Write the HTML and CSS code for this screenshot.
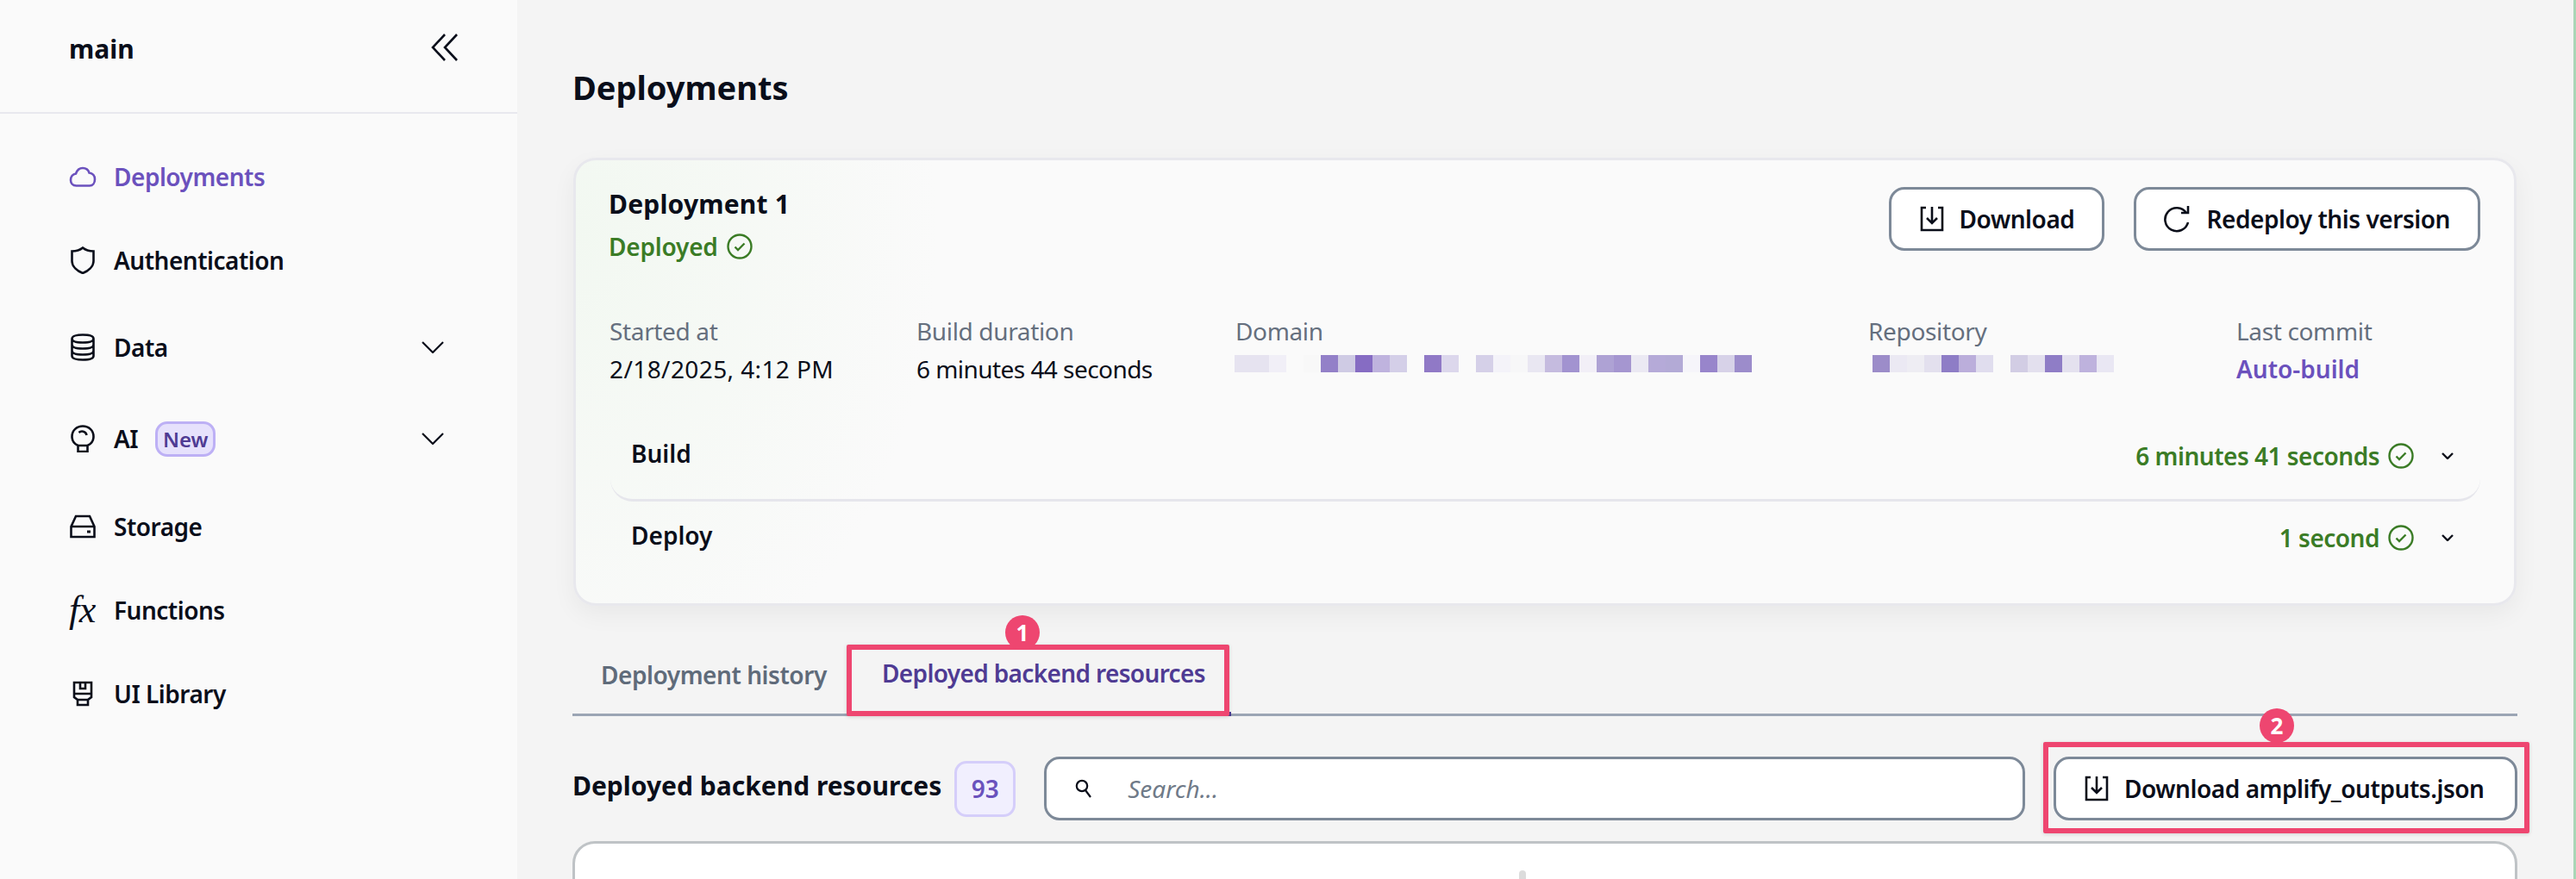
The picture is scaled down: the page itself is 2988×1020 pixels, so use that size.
FILE: index.html
```html
<!DOCTYPE html>
<html lang="en">
    <head>
        <meta charset="UTF-8" />
        <title>Deployments</title>
        <link rel="stylesheet" href="styles.css">
    </head>

    <body>
        <aside class="sidebar">
            <div class="side-head">
                <span class="branch">main</span>
                <svg class="collapse" viewBox="0 0 32 32"><path d="M16 1 L2 16 L16 31 M30 1 L16 16 L30 31" /></svg>
            </div>
            <nav class="nav">
                <a class="nav-item active">
                    <svg class="nav-icon" viewBox="0 0 32 32"><path d="M8.5 26.5 C4 26.5 2 23 2 20 C2 16 4.5 13 8 12.5 C9.5 8 13 6 16 6 C20 6 22.5 8.5 23.5 11.5 C27.5 12 30 15 30 19 C30 23.5 27.5 26.5 24 26.5 Z" /></svg>
                    Deployments
                </a>
                <a class="nav-item">
                    <svg class="nav-icon" viewBox="0 0 32 32"><path d="M16 1.5 C19 4 24 5.5 28.5 5.5 V17 C28.5 23.5 22 28.5 16 31 C10 28.5 3.5 23.5 3.5 17 V5.5 C8 5.5 13 4 16 1.5 Z" /></svg>
                    Authentication
                </a>
                <a class="nav-item tall">
                    <svg class="nav-icon" viewBox="0 0 32 32"><path d="M3.5 6 C3.5 3 9 1.5 16 1.5 S28.5 3 28.5 6 V26 C28.5 29 23 30.5 16 30.5 S3.5 29 3.5 26 Z M3.5 6 C3.5 9 9 10.5 16 10.5 S28.5 9 28.5 6 M3.5 13 C3.5 16 9 17.5 16 17.5 S28.5 16 28.5 13 M3.5 20 C3.5 23 9 24.5 16 24.5 S28.5 23 28.5 20" /></svg>
                    Data
                    <svg class="nav-caret" viewBox="0 0 26 14"><path d="M1 1 L13 13 L25 1" /></svg>
                </a>
                <a class="nav-item tall">
                    <svg class="nav-icon" viewBox="0 0 32 32"><path d="M10.5 24 C6 22 3.5 18 3.5 13.5 C3.5 6.5 9 1.5 16 1.5 S28.5 6.5 28.5 13.5 C28.5 18 26 22 21.5 24 Z M10.5 24 V31 H21.5 V24 M11.5 9 C14 6.5 19.5 7 20.5 12" /></svg>
                    AI
                    <span class="new-tag">New</span>
                    <svg class="nav-caret" viewBox="0 0 26 14"><path d="M1 1 L13 13 L25 1" /></svg>
                </a>
                <a class="nav-item">
                    <svg class="nav-icon" viewBox="0 0 32 32"><path d="M2.5 16 L8 4 H24 L29.5 16 V28 H2.5 Z M2.5 16 H29.5" /><rect class="fill" x="21" y="20.5" width="4" height="3" /></svg>
                    Storage
                </a>
                <a class="nav-item">
                    <span class="fx">fx</span>
                    Functions
                </a>
                <a class="nav-item">
                    <svg class="nav-icon" viewBox="0 0 32 32"><path d="M6 3 H26 V20 L22 23 V29 H10 V23 L6 20 Z M6 16 H26 M13 3 V10 H19 V3 M10 23 H22" /></svg>
                    UI Library
                </a>
            </nav>
        </aside>

        <main class="main">
            <h1 class="page-title">Deployments</h1>

            <section class="card">
                <div class="card-top">
                    <div>
                        <div class="card-title">Deployment 1</div>
                        <div class="status">Deployed
                            <svg class="check" viewBox="0 0 30 30"><circle cx="15" cy="15" r="13.5" /><path d="M9.5 15.5 L13 19 L20.5 11.5" /></svg>
                        </div>
                    </div>
                    <div class="actions">
                        <button class="btn">
                            <svg class="btn-icon" viewBox="0 0 28 30"><path d="M7 2 H2 V28 H26 V2 H21 M14 1 V20 M8 14 L14 20 L20 14" /></svg>
                            Download
                        </button>
                        <button class="btn">
                            <svg class="btn-icon refresh" viewBox="0 0 32 32"><path d="M27 9 A13.5 13.5 0 1 0 29 20 M29 1 V9 H21" /></svg>
                            Redeploy this version
                        </button>
                    </div>
                </div>

                <div class="meta">
                    <div>
                        <div class="meta-label">Started at</div>
                        <div class="meta-value wide">2/18/2025, 4:12 PM</div>
                    </div>
                    <div>
                        <div class="meta-label">Build duration</div>
                        <div class="meta-value narrow">6 minutes 44 seconds</div>
                    </div>
                    <div>
                        <div class="meta-label">Domain</div>
                        <div class="meta-value"><div class="blur blur-domain"></div></div>
                    </div>
                    <div>
                        <div class="meta-label">Repository</div>
                        <div class="meta-value"><div class="blur blur-repo"></div></div>
                    </div>
                    <div>
                        <div class="meta-label">Last commit</div>
                        <div class="meta-value link">Auto-build</div>
                    </div>
                </div>

                <div class="step step-build">
                    <span class="step-name">Build</span>
                    <span class="step-time">6 minutes 41 seconds
                        <svg class="check" viewBox="0 0 30 30"><circle cx="15" cy="15" r="13.5" /><path d="M9.5 15.5 L13 19 L20.5 11.5" /></svg>
                    </span>
                    <svg class="step-caret" viewBox="0 0 14 8"><path d="M1 1 L7 7 L13 1" /></svg>
                </div>
                <div class="step">
                    <span class="step-name">Deploy</span>
                    <span class="step-time">1 second
                        <svg class="check" viewBox="0 0 30 30"><circle cx="15" cy="15" r="13.5" /><path d="M9.5 15.5 L13 19 L20.5 11.5" /></svg>
                    </span>
                    <svg class="step-caret" viewBox="0 0 14 8"><path d="M1 1 L7 7 L13 1" /></svg>
                </div>
            </section>

            <div class="tabs">
                <a class="tab">Deployment history</a>
                <a class="tab tab-active">
                    Deployed backend resources
                    <span class="callout callout-tab"><span class="callout-num">1</span></span>
                </a>
            </div>

            <div class="toolbar">
                <h2 class="toolbar-title">Deployed backend resources</h2>
                <span class="count">93</span>
                <label class="search">
                    <svg class="search-icon" viewBox="0 0 20 22"><circle cx="8" cy="8" r="6.2" /><path d="M12 13 L18 21" /></svg>
                    <input class="search-input" type="text" placeholder="Search..." />
                </label>
                <button class="btn btn-outputs">
                    <svg class="btn-icon" viewBox="0 0 28 30"><path d="M7 2 H2 V28 H26 V2 H21 M14 1 V20 M8 14 L14 20 L20 14" /></svg>
                    Download amplify_outputs.json
                    <span class="callout callout-btn"><span class="callout-num">2</span></span>
                </button>
            </div>

            <section class="table-card">
                <span class="spinner-dot"></span>
            </section>
        </main>

        <div class="edge"></div>
    </body>
</html>
```

FILE: styles.css
```css
* {
    margin: 0;
    padding: 0;
    box-sizing: border-box;
}

html,
body {
    height: 100%;
    overflow: hidden;
}

body {
    display: flex;
    background: #f4f4f4;
    color: #0a0e1a;
    font-family: "Noto Sans", "Open Sans", sans-serif;
    font-size: 28px;
}

svg {
    fill: none;
    stroke: currentColor;
    flex: none;
}

/* sidebar */
.sidebar {
    width: 600px;
    flex: none;
    background: #fafafa;
}

.side-head {
    height: 132px;
    padding: 39px 68px 0 80px;
    display: flex;
    justify-content: space-between;
    align-items: flex-start;
    border-bottom: 2px solid #e8e8ee;
}

.branch {
    font-size: 30px;
    font-weight: 700;
    line-height: 36px;
}

.collapse {
    width: 32px;
    height: 32px;
    stroke-width: 2.6;
}

.nav {
    padding-top: 24px;
}

.nav-item {
    height: 97px;
    padding: 0 85px 0 80px;
    display: flex;
    align-items: center;
    font-weight: 600;
    letter-spacing: -0.5px;
}

.nav-item.tall {
    height: 106px;
}

.nav-item.active {
    color: #6b51bd;
}

.nav-icon {
    width: 32px;
    height: 32px;
    margin-right: 20px;
    stroke-width: 2.6;
}

.nav-icon .fill {
    fill: currentColor;
    stroke: none;
}

.fx {
    width: 32px;
    margin-right: 20px;
    font: italic 44px/32px "Liberation Serif", serif;
}

.nav-caret {
    width: 26px;
    height: 14px;
    margin-left: auto;
    stroke-width: 2.2;
}

.new-tag {
    margin-left: 20px;
    height: 41px;
    width: 70px;
    display: flex;
    align-items: center;
    justify-content: center;
    background: #e6e1fc;
    border: 3px solid #bdb0f5;
    border-radius: 14px;
    color: #4f3b93;
    font-size: 24px;
    letter-spacing: 0;
}

/* main column */
.main {
    flex: 1;
    min-width: 0;
    padding: 0 65px 0 64px;
}

.page-title {
    height: 183px;
    padding-top: 74px;
    font-size: 38px;
    line-height: 54px;
    font-weight: 700;
}

.card {
    height: 520px;
    margin: 0 1px;
    padding: 31px 39px 0 38px;
    border: 3px solid #e8e8ed;
    border-radius: 26px;
    background: radial-gradient(ellipse 420px 560px at 0 80px, #f2f8f1, #fafafa);
    box-shadow: 0 10px 28px rgba(0, 0, 0, 0.05);
}

.card-top {
    display: flex;
    justify-content: space-between;
    height: 90px;
}

.card-title {
    font-size: 30px;
    line-height: 40px;
    font-weight: 700;
    letter-spacing: 0.2px;
}

.status {
    margin-top: 9px;
    display: flex;
    align-items: center;
    gap: 10px;
    color: #3b7c26;
    font-weight: 600;
    line-height: 40px;
    letter-spacing: -0.2px;
}

.check {
    width: 30px;
    height: 30px;
    stroke-width: 2.4;
}

.actions {
    display: flex;
    gap: 34px;
}

.btn {
    height: 74px;
    padding: 0 32px 0 33px;
    display: flex;
    align-items: center;
    gap: 18px;
    position: relative;
    background: #fff;
    border: 3px solid #7d8998;
    border-radius: 18px;
    color: inherit;
    font: 600 28px "Noto Sans", "Open Sans", sans-serif;
    letter-spacing: -0.45px;
    white-space: nowrap;
}

.btn-icon {
    width: 28px;
    height: 30px;
    stroke-width: 2.6;
}

.btn-icon.refresh {
    width: 32px;
    height: 32px;
    margin-left: -2px;
}

.meta {
    margin-top: 57px;
    margin-left: 1px;
    display: grid;
    grid-template-columns: 356px 370px 734px 427px auto;
    line-height: 40px;
}

.meta-label {
    color: #656f7e;
    letter-spacing: -0.35px;
}

.meta-value {
    margin-top: 4px;
    height: 40px;
}

.meta-value.wide {
    letter-spacing: 0.4px;
}

.meta-value.narrow {
    letter-spacing: -0.55px;
}

.link {
    color: #6b51bd;
    font-weight: 600;
}

.blur {
    height: 20px;
    margin-top: 8px;
}

.blur-domain {
    width: 600px;
    margin-left: -1px;
    background: linear-gradient(90deg,
        #e6e3f0 0 40px, #f1eff7 40px 60px, #fafafa 60px 80px, #f8f8f8 80px 100px,
        #9380c8 100px 120px, #cfcbe4 120px 140px, #866cc3 140px 160px, #bfb3de 160px 180px,
        #d4cfe8 180px 200px, #fafafa 200px 220px, #9079c6 220px 240px, #dcd7ec 240px 260px,
        #fafafa 260px 280px, #d5d0e8 280px 300px, #f4f3f9 300px 320px, #f7f7f8 320px 340px,
        #e9e7f2 340px 360px, #c5bbdf 360px 380px, #a293d0 380px 400px, #f2eff7 400px 420px,
        #aea2d4 420px 440px, #a596d0 440px 460px, #ebe9f3 460px 480px, #b5aad8 480px 500px,
        #b3aad6 500px 520px, #f6f5fa 520px 540px, #9885cb 540px 560px, #d7d2e8 560px 580px,
        #9c8ccb 580px 600px);
}

.blur-repo {
    width: 280px;
    margin-left: 5px;
    background: linear-gradient(90deg,
        #9c8cc9 0 20px, #ebe9f3 20px 40px, #eeedf3 40px 60px, #e3e0ee 60px 80px,
        #8e7dc6 80px 100px, #bbaedb 100px 120px, #e0ddee 120px 140px, #fafafa 140px 160px,
        #d2cde4 160px 180px, #e3e0ee 180px 200px, #8f7dc6 200px 220px, #e4e1ef 220px 240px,
        #beb2dd 240px 260px, #e9e7f3 260px 280px);
}

.step {
    height: 84px;
    margin-left: 2px;
    padding: 0 31px 0 24px;
    display: flex;
    align-items: center;
    font-weight: 600;
}

.step-build {
    height: 103px;
    margin-top: 27px;
    border-bottom: 3px solid #e6e6ec;
    border-radius: 0 0 26px 26px;
}

.step-name {
    flex: 1;
    margin-bottom: 6px;
}

.step-time {
    display: flex;
    align-items: center;
    gap: 10px;
    color: #3b7c26;
    letter-spacing: -0.5px;
}

.step-caret {
    width: 14px;
    height: 8px;
    margin-left: 32px;
    stroke-width: 2.4;
}

/* tabs */
.tabs {
    margin-top: 45px;
    height: 83px;
    display: flex;
    border-bottom: 3px solid #9ba5b4;
}

.tab {
    width: 318px;
    height: 80px;
    padding: 0 0 10px 33px;
    display: flex;
    align-items: center;
    color: #5f6b7a;
    font-weight: 600;
    letter-spacing: -0.45px;
}

.tab-active {
    width: 446px;
    padding: 0 0 14px 41px;
    position: relative;
    color: #4f3b93;
    letter-spacing: -0.65px;
}

.tab-active::after {
    content: "";
    position: absolute;
    left: 6px;
    right: 0;
    bottom: -3px;
    height: 5px;
    background: #4f3b93;
}

/* numbered annotations */
.callout {
    position: absolute;
    border: 6px solid #ee4670;
    border-radius: 2px;
    box-shadow: 0 1px 4px rgba(0, 0, 0, 0.15);
    z-index: 1;
}

.callout-tab {
    inset: 0 2px -3px 0;
}

.callout-btn {
    inset: -20px -17px -18px -15px;
}

.callout-num {
    position: absolute;
    width: 40px;
    height: 40px;
    display: flex;
    align-items: center;
    justify-content: center;
    background: #ee4670;
    border-radius: 50%;
    color: #fff;
    font-size: 26px;
    font-weight: 700;
    letter-spacing: 0;
}

.callout-tab .callout-num {
    left: 178px;
    top: -40px;
}

.callout-btn .callout-num {
    left: 245px;
    top: -45px;
}

/* resources toolbar */
.toolbar {
    margin-top: 47px;
    display: flex;
    align-items: center;
}

.toolbar-title {
    margin-bottom: 8px;
    font-size: 30px;
    font-weight: 700;
}

.count {
    margin-left: 15px;
    width: 71px;
    height: 65px;
    display: flex;
    align-items: center;
    justify-content: center;
    background: #f1effe;
    border: 3px solid #d5cefa;
    border-radius: 14px;
    color: #6a52bd;
    font-weight: 600;
}

.search {
    margin: 0 33px;
    height: 74px;
    flex: 1;
    display: flex;
    align-items: center;
    padding-left: 33px;
    background: #fff;
    border: 3px solid #7d8998;
    border-radius: 18px;
}

.search-icon {
    width: 20px;
    height: 22px;
    margin-right: 41px;
    stroke-width: 2.2;
}

.search-input {
    flex: 1;
    border: 0;
    outline: 0;
    font: italic 28px "Noto Sans", "Open Sans", sans-serif;
}

.search-input::placeholder {
    color: #6f7a88;
}

.btn-outputs {
    width: 538px;
    flex: none;
    padding: 0 33px;
}

.table-card {
    margin-top: 24px;
    height: 300px;
    position: relative;
    background: #fff;
    border: 3px solid #bfc3c6;
    border-radius: 26px;
}

.spinner-dot {
    position: absolute;
    left: 1095px;
    top: 31px;
    width: 8px;
    height: 20px;
    background: #dcdcdc;
    border-radius: 4px;
}

.edge {
    width: 3px;
    flex: none;
    background: #a9d6b6;
}
```
